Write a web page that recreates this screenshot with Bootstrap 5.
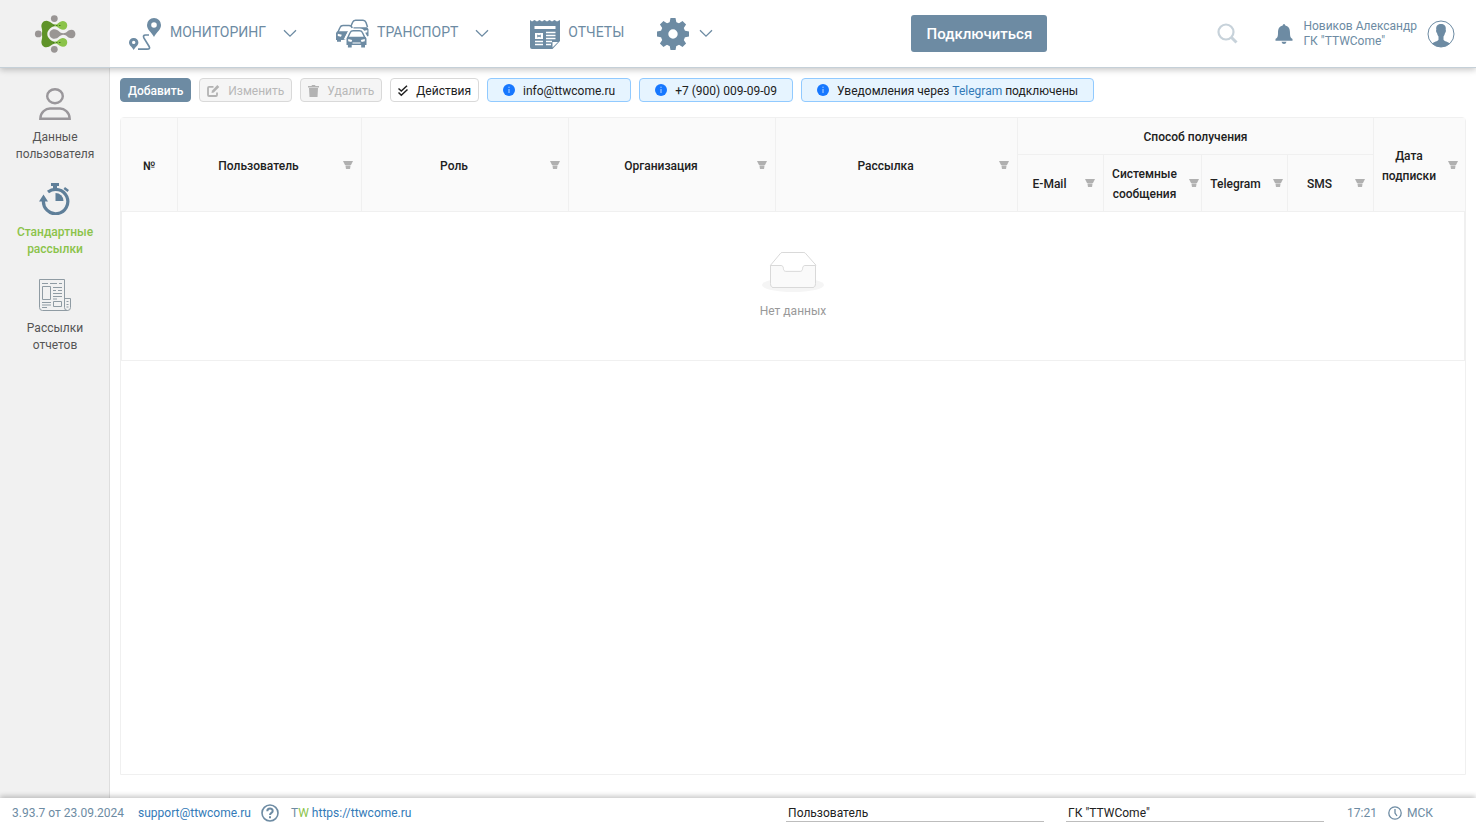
<!DOCTYPE html>
<html lang="ru">
<head>
<meta charset="utf-8">
<meta name="viewport" content="width=device-width, initial-scale=1">
<title>Стандартные рассылки</title>
<link href="https://cdn.jsdelivr.net/npm/bootstrap@5.3.0/dist/css/bootstrap.min.css" rel="stylesheet">
<style>
:root { --steel: #6d8ba3; --line: #f0f0f0; --blue: #337ab7; --green: #8bc34a; }
body { font: 400 12px/20px Roboto, sans-serif; color: #212121; }
a { color: var(--blue); text-decoration: none; }
svg { display: block; flex: none; }
.top-bar { height: 68px; border-bottom: 1px solid #c5d0d8; box-shadow: 0 2px 6px rgba(0,0,0,.22); z-index: 2; color: var(--steel); }
.brand-cell { width: 110px; background: #f1f1f1; }
.top-nav { padding-left: 19px; }
.menu-link { color: var(--steel); font-size: 14px; line-height: 20px; background: none; border: 0; padding: 0; }
.menu-link.btn:hover { color: var(--steel); }
.menu-link span { padding: 0 0 3px 8px; }
.menu-link svg + svg { margin-left: 9px; }
.menu-link span + svg { margin-left: 17px; }
.menu-link.spaced { margin-left: 39px; }
.menu-link.gear { margin-left: 32px; }
.connect { background: var(--steel); color: #fff; font-size: 15px; font-weight: 500; width: 136px; height: 37px; border-radius: 3px; padding: 1px 0 0; }
.search-gap { margin-left: 170px; }
.bell-gap { margin: 0 10px 0 37px; }
.avatar { margin: 0 -3px 0 10px; }
.user-name { line-height: 15px; color: var(--steel); }
.side { width: 110px; background: #f1f1f1; border-right: 1px solid #dedede; }
.side a { color: #555; line-height: 17px; text-align: center; min-height: 94px; padding: 20px 0 0 1px; }
.side a.active { color: var(--green); font-weight: 500; margin-bottom: 1px; }
.side svg { margin: 0 auto 9px; }
.content-area { padding: 10px 10px 23px 10px; }
.tools { margin-bottom: 15px; }
.tool { height: 24px; font-size: 12px; line-height: 20px; border: 1px solid #d9d9d9; border-radius: 4px; background: #fff; color: #212121; padding: 2px 7px 1px; display: flex; align-items: center; gap: 8px; }
.tool:disabled { background: #f5f5f5; color: #b8b8b8; }
.tool.main-tool { background: var(--steel); border-color: var(--steel); color: #fff; font-weight: 500; }
.note { height: 24px; border: 1px solid #91caff; background: #e6f4ff; border-radius: 4px; padding: 1px 15px 0; display: flex; align-items: center; gap: 8px; }
.note svg { margin-bottom: 1px; }
.grid-box { border: 1px solid var(--line); border-radius: 4px 4px 0 0; }
.grid-table { table-layout: fixed; width: 100%; border-collapse: separate; border-spacing: 0; }
.grid-table th { background: #fafafa; border-right: 1px solid var(--line); border-bottom: 1px solid var(--line); font-weight: 500; text-align: center; vertical-align: middle; padding: 2px 4px 0 0; height: 57px; }
.grid-table th.group, .grid-table th.number { height: 37px; padding: 2px 0 0; }
.grid-table th.last { border-right: 0; padding-right: 3px; }
.grid-table th.tight { padding-right: 0; }
.grid-table td { border: 1px solid var(--line); border-top: 0; height: 149px; text-align: center; color: #999; padding: 0; }
.head-cell { display: flex; align-items: center; }
.head-cell span { flex: 1; }
.filter { border: 0; background: none; padding: 0 4px 2px; }
.tight .filter { padding-right: 2px; }
.bottom-bar { height: 30px; background: #fff; box-shadow: 0 -2px 5px rgba(0,0,0,.22); z-index: 2; color: var(--steel); padding: 0 43px 0 12px; }
.mail { margin-left: 14px; }
.help { margin: 0 12px 0 10px; }
.line-input { width: 258px; height: 18px; border: 0; border-bottom: 1px solid #bdbdbd; padding: 1px 2px 0; background: none; color: #212121; line-height: 16px; }
.line-input + .line-input { margin-left: 22px; }
.clock-gap { margin-left: 23px; }
.clock { margin: 0 5px 0 11px; }
</style>
</head>
<body class="d-flex flex-column vh-100 overflow-hidden">
<svg class="d-none" aria-hidden="true">
  <symbol id="chev" viewBox="0 0 14 9"><path d="M1 1.200l6 6 6-6" fill="none" stroke="currentColor" stroke-width="1.300"/></symbol>
  <symbol id="funnel" viewBox="0 0 10 10"><path d="M0 1h10L8 5H2z" fill="#b0b0b0"/><path d="M2.500 5h5v1h-5z" fill="#d0d0d0"/><path d="M2.500 6h5L7 9H3z" fill="#b3b3b3"/></symbol>
  <symbol id="info" viewBox="0 0 12 12"><circle cx="6" cy="6" r="6" fill="#1677ff"/><path d="M6 5v4M6 2.700v1.200" stroke="#b9d7ff" stroke-width="1"/></symbol>
</svg>

<header class="top-bar d-flex flex-shrink-0 position-relative bg-white">
  <a href="#" class="brand-cell d-flex align-items-center justify-content-center" aria-label="TTWCome">
    <svg width="42" height="38" viewBox="0 0 42 38">
      <g fill="#999594"><circle cx="20.300" cy="3.600" r="3.400"/><circle cx="4.300" cy="18.900" r="3.400"/><circle cx="20.300" cy="34.300" r="3.400"/></g>
      <path id="half" d="M8 19c0-2.500.5-3.500-.3-6C6.500 9 9 5.700 12.300 5.700c4.200 0 5.500 4 10.200 4v1.400c-3 0-5 1-6.500 2.400-2 2-2.700 3.500-2.700 5.500z" fill="#5f9329"/>
      <use href="#half" transform="matrix(1 0 0 -1 0 37.900)"/>
      <g id="lobe"><path d="M20 9.900c4 0 5-4 9-4 5.700 0 5.700 8.900 0 8.900-4 0-5-3.700-9-3.700z" fill="#8bc34a"/><path d="M19 10.500h8.500" stroke="#447a20" stroke-dasharray="1.500 1.500"/></g><use href="#lobe" y="17"/>
      <path d="M20.300 14.200c4.500 0 5 4 9 4 3.500 0 4.500-3.500 8-3.500 5.500 0 5.500 8.500 0 8.500-3.500 0-4.500-3.500-8-3.500-4 0-4.500 4-9 4-6.400 0-6.400-9.500 0-9.500z" fill="#999594"/>
    </svg>
  </a>
  <nav class="top-nav d-flex align-items-center flex-grow-1">
    <button class="btn menu-link d-flex align-items-center">
      <svg width="33" height="34" viewBox="0 0 33 34" fill="currentColor"><path fill-rule="evenodd" d="M25 1a7 7 0 0 0-7 7c0 5 4.500 7 7 12 2.500-5 7-7 7-12a7 7 0 0 0-7-7zm0 4.200a2.800 2.800 0 1 1 0 5.600 2.800 2.800 0 0 1 0-5.600z"/><path fill-rule="evenodd" d="M4.700 21a4.500 4.500 0 0 0-4.700 4.500c0 3 3.200 4.500 4.700 7.500 1.500-3 4.700-4.500 4.700-7.500A4.500 4.500 0 0 0 4.700 21zm0 2.700a1.700 1.700 0 1 1 0 3.400 1.700 1.700 0 0 1 0-3.400z"/><path d="M9 32.200h9c2.500 0 3.200-1 2-3l-5-8c-1-2-.5-3.200 1.500-3.200H20" fill="none" stroke="currentColor" stroke-width="1.700"/></svg>
      <span>МОНИТОРИНГ</span><svg width="14" height="9"><use href="#chev"/></svg>
    </button>
    <button class="btn menu-link spaced d-flex align-items-center">
      <svg width="33" height="29" viewBox="0 0 33 29"><path d="M15 7l1.500-3.500q.8-2.300 3-2.300h7.500q2.200 0 3 2.300L31.500 8" fill="none" stroke="currentColor" stroke-width="1.500"/><path d="M17.500 8.300h13.700l1.300 2V17l-2.500 1-3-5.500q-1.500-2.500-9.500-2.200z" fill="currentColor"/><path d="M2 13l2-4.500c.6-1.500 1.500-2 3-2h6q2.500 0 3.200 2.500" fill="none" stroke="currentColor" stroke-width="1.500"/><path d="M1.200 12.200H12l-2.700 5.500V21H5v1.800H1V21H0v-7z" fill="currentColor"/><path d="M1.800 14.800l4 1-.8 2-3.200-.8zM27.500 12l3.800-1v2.300l-3 .7z" fill="#fff"/><path d="M11 18.500l2.800-5q.8-2 3-2h7q2.200 0 3 2l2.800 5z" fill="#fff" stroke="#fff" stroke-width="4"/><path d="M11.800 18.500l2.400-5q.8-1.800 3-1.800h6.200q2.200 0 3 1.800l2.400 5z" fill="#fff" stroke="currentColor" stroke-width="1.500"/><path d="M11.500 18h18l1 1.500V26h-1.500v2.500h-3.800V26h-9.500v2.500h-3.800V26H10.500v-6.500z" fill="currentColor"/><path d="M12.200 20l4 1-.8 2-3.200-.8zM28.800 20l-4 1 .8 2 3.200-.8zM16.500 23.500h8v1h-8z" fill="#fff"/></svg>
      <span>ТРАНСПОРТ</span><svg width="14" height="9"><use href="#chev"/></svg>
    </button>
    <a href="#" class="menu-link spaced d-flex align-items-center">
      <svg width="32" height="30" viewBox="-2 0 32 30"><path d="M0 1l2 1.500L4.500 1 7 2.500 9.500 1 12 2.500 14.500 1 17 2.500 19.500 1 22 2.500 24.500 1 27 2.500 30 1v21l-7.500 8H2q-2 0-2-2z" fill="currentColor"/><path d="M4.500 7h21v3h-21zM5 14h8v6H5z" fill="#fff"/><path d="M16 13.500h9.500M16 16.500h9.500M16 19.500h9.500M5 22.500h8M16 22.500h6M5 25.500h8M16 25.500h5" stroke="#fff" stroke-width="1.300"/><path d="M22.500 28.500v-5.500h5.500z" fill="#fff"/><path d="M7 16l4 2M7 18l4-2" stroke="currentColor"/></svg>
      <span>ОТЧЕТЫ</span>
    </a>
    <button class="btn menu-link gear d-flex align-items-center" aria-label="Настройки">
      <svg width="34" height="34" viewBox="0 0 34 34"><g fill="currentColor"><path id="teeth" d="M14.500 1h5l1 5h-7zM14.500 33h5l1-5h-7z"/><use href="#teeth" transform="rotate(45 17 17)"/><use href="#teeth" transform="rotate(90 17 17)"/><use href="#teeth" transform="rotate(135 17 17)"/></g><circle cx="17" cy="17" r="8.500" fill="none" stroke="currentColor" stroke-width="7.600"/></svg>
      <svg width="14" height="9"><use href="#chev"/></svg>
    </button>
  </nav>
  <div class="d-flex align-items-center pe-4">
    <button class="btn connect">Подключиться</button>
    <button class="btn p-0 border-0 search-gap" aria-label="Поиск"><svg width="21" height="21" viewBox="0 0 21 21" fill="none" stroke="#c7d2da" stroke-width="2.200"><circle cx="9" cy="9" r="7.500"/><path d="M14.500 14.500l5 5" stroke-width="3"/></svg></button>
    <button class="btn p-0 border-0 bell-gap" aria-label="Уведомления"><svg width="18" height="20" viewBox="0 0 18 20" fill="#6d8ba3"><path d="M9 0q1.200 0 1.300 1.500C14 2.300 15 5 15 9c0 4 1 5 2.500 6v1.800H.5V15C2 14 3 13 3 9c0-4 1-6.700 4.700-7.500Q7.800 0 9 0zM6.500 17.800h5Q11 20 9 20t-2.500-2.200z"/></svg></button>
    <span class="user-name">Новиков Александр<br>ГК "TTWCome"</span>
    <svg class="avatar" width="28" height="28" viewBox="0 0 28 28"><circle cx="14" cy="14" r="13" fill="#fff" stroke="#6d8ba3"/><path d="M14 4c-3.800 0-5.300 2.500-4.700 5.700-.6 1 0 2.700.7 3.300.3 1.600.8 2.700 1.500 3.400v3.300c-.7 1.600-4.500 2-6.700 3.900Q9 27 14 27t9.200-3.400c-2.200-1.900-6-2.300-6.700-3.900v-3.300c.7-.7 1.200-1.800 1.500-3.400.7-.6 1.300-2.300.7-3.300C19.300 6.500 17.800 4 14 4z" fill="#6d8ba3"/></svg>
  </div>
</header>

<div class="d-flex flex-grow-1 overflow-hidden">
  <nav class="side flex-shrink-0 d-flex flex-column">
    <a href="#"><svg width="32" height="32" viewBox="0 0 32 32" fill="none" stroke="#9a979b" stroke-width="2.400"><ellipse cx="16" cy="8.200" rx="7.800" ry="7"/><path d="M1.300 30.800h29.400C30.700 24 25 20.500 21 20.500H11c-4 0-9.700 3.500-9.700 10.300z"/></svg>Данные<br>пользователя</a>
    <a href="#" class="active"><svg width="32" height="32" viewBox="0 0 32 32"><path d="M4.500 17a12.200 12.200 0 1 0 4.500-8" fill="none" stroke="#5f7f99" stroke-width="3.200"/><path d="M0 18.500l4.500-7 4.500 7zM12 0h8v3h-2v4h-4V3h-2zM26 4l4 3-1.500 2-4-3z" fill="#5f7f99"/><path d="M16.500 10a8 8 0 0 1 8 8h-8z" fill="#5f7f99"/></svg>Стандартные<br>рассылки</a>
    <a href="#"><svg width="32" height="32" viewBox="0 0 32 32" fill="none" stroke="#8f9ba3" stroke-width="1"><path d="M.5.500h25v28q0 3 3 3H3.500q-3 0-3-3zM25.500 19.500h6v9q0 3-3 3M3.500 7.500h8v13h-8zM14.500 22.500h8v5h-8zM3 4.500h6m2 0h7m2 0h3M14 8.500h9m-9 3h3m2 0h4m-9 3h9m-9 3h9m-9 2.500h4M3 23.500h9m-9 2.500h9m-9 2.500h5M27.500 22.500h2m-2 3h2M27.500 28h2"/></svg>Рассылки<br>отчетов</a>
  </nav>

  <main class="flex-grow-1 d-flex flex-column content-area">
    <div class="d-flex gap-2 tools">
      <button class="tool main-tool">Добавить</button>
      <button class="tool" disabled><svg width="13" height="12" viewBox="0 0 13 12" fill="none" stroke="#b3b3b3" stroke-width="1.800"><path d="M6.500 1.900H2Q1 1.900 1 3v7q0 1 1 1h7q1 0 1-1V7.500"/><path d="M4.500 8l.4-2.300L10.300 0l2 2-5.500 5.500z" fill="#b3b3b3" stroke="none"/></svg>Изменить</button>
      <button class="tool" disabled><svg width="11" height="12" viewBox="0 0 11 12" fill="#b3b3b3"><path d="M0 1h3.500l.5-1h3l.5 1H11v1.500H0zM1 3h9L9.500 12h-8z"/></svg>Удалить</button>
      <button class="tool"><svg width="10" height="12" viewBox="0 0 10 12" fill="none" stroke="#212121" stroke-width="1.500"><path d="M.5 3.500L3.300 6 9 .8M.5 7.500l2.800 2.700L9.500 4.500"/></svg>Действия</button>
      <span class="note"><svg width="12" height="12"><use href="#info"/></svg>info@ttwcome.ru</span>
      <span class="note"><svg width="12" height="12"><use href="#info"/></svg>+7 (900) 009-09-09</span>
      <span class="note"><svg width="12" height="12"><use href="#info"/></svg><span>Уведомления через <a href="#">Telegram</a> подключены</span></span>
    </div>
    <div class="grid-box flex-grow-1">
      <table class="grid-table">
        <colgroup><col style="width:57px"><col style="width:184px"><col style="width:207px"><col style="width:207px"><col style="width:242px"><col style="width:86px"><col style="width:98px"><col style="width:86px"><col style="width:86px"><col style="width:91px"></colgroup>
        <thead>
          <tr>
            <th rowspan="2" class="number">№</th>
            <th rowspan="2"><div class="head-cell"><span>Пользователь</span><button class="filter" aria-label="Фильтр"><svg width="10" height="10"><use href="#funnel"/></svg></button></div></th>
            <th rowspan="2"><div class="head-cell"><span>Роль</span><button class="filter" aria-label="Фильтр"><svg width="10" height="10"><use href="#funnel"/></svg></button></div></th>
            <th rowspan="2"><div class="head-cell"><span>Организация</span><button class="filter" aria-label="Фильтр"><svg width="10" height="10"><use href="#funnel"/></svg></button></div></th>
            <th rowspan="2"><div class="head-cell"><span>Рассылка</span><button class="filter" aria-label="Фильтр"><svg width="10" height="10"><use href="#funnel"/></svg></button></div></th>
            <th colspan="4" class="group">Способ получения</th>
            <th rowspan="2" class="last"><div class="head-cell"><span>Дата подписки</span><button class="filter" aria-label="Фильтр"><svg width="10" height="10"><use href="#funnel"/></svg></button></div></th>
          </tr>
          <tr>
            <th><div class="head-cell"><span>E-Mail</span><button class="filter" aria-label="Фильтр"><svg width="10" height="10"><use href="#funnel"/></svg></button></div></th>
            <th class="tight"><div class="head-cell"><span>Системные сообщения</span><button class="filter" aria-label="Фильтр"><svg width="10" height="10"><use href="#funnel"/></svg></button></div></th>
            <th class="pe-1"><div class="head-cell"><span>Telegram</span><button class="filter px-1 pe-0" aria-label="Фильтр"><svg width="10" height="10"><use href="#funnel"/></svg></button></div></th>
            <th><div class="head-cell"><span>SMS</span><button class="filter" aria-label="Фильтр"><svg width="10" height="10"><use href="#funnel"/></svg></button></div></th>
          </tr>
        </thead>
        <tbody><tr><td colspan="10">
          <svg class="mx-auto mb-2" width="64" height="41" viewBox="0 0 64 41"><ellipse cx="32" cy="33" rx="31" ry="7" fill="#f5f5f5"/><g stroke="#d9d9d9"><path d="M55 13.260L44.850 1.760C44.370.970 43.660.5 42.920.5H21.080c-.74 0-1.450.47-1.930 1.260L9.500 13.260V22h45v-8.740z" fill="#fff"/><path d="M41.610 16.430c0-1.600 1-2.920 2.230-2.920H54.500v18c0 2.120-1 4-2.500 4H12c-1.500 0-2.500-1.880-2.500-4v-18h10.660c1.230 0 2.230 1.320 2.230 2.930v.02c0 1.600 1 2.900 2.240 2.900h14.740c1.230 0 2.240-1.310 2.240-2.920v-.01z" fill="#fafafa"/></g></svg>
          Нет данных
        </td></tr></tbody>
      </table>
    </div>
  </main>
</div>

<footer class="bottom-bar d-flex align-items-center flex-shrink-0 position-relative">
  <span>3.93.7 от 23.09.2024</span>
  <a href="#" class="mail">support@ttwcome.ru</a>
  <a href="#" class="help" aria-label="Справка"><svg width="18" height="18" viewBox="0 0 18 18" fill="none" stroke="#6d8ba3"><circle cx="9" cy="9" r="8" stroke-width="1.600"/><path d="M6.300 7.200c0-3.500 5.400-3.500 5.400-.3C11.700 9 9 8.800 9 11M9 12.300v2" stroke-width="2"/></svg></a>
  <span>T<span style="color:var(--green)">W</span> <a href="#">https://ttwcome.ru</a></span>
  <input class="line-input ms-auto" value="Пользователь" aria-label="Роль" spellcheck="false">
  <input class="line-input" value='ГК "TTWCome"' aria-label="Организация" spellcheck="false">
  <span class="clock-gap">17:21</span>
  <svg class="clock" width="14" height="14" viewBox="0 0 14 14" fill="none" stroke="#6d8ba3" stroke-width="1.300"><circle cx="7" cy="7" r="6.200"/><path d="M7 3v4l2 3"/></svg>
  <span>МСК</span>
</footer>
<script src="https://cdn.jsdelivr.net/npm/bootstrap@5.3.0/dist/js/bootstrap.bundle.min.js"></script>
</body>
</html>
